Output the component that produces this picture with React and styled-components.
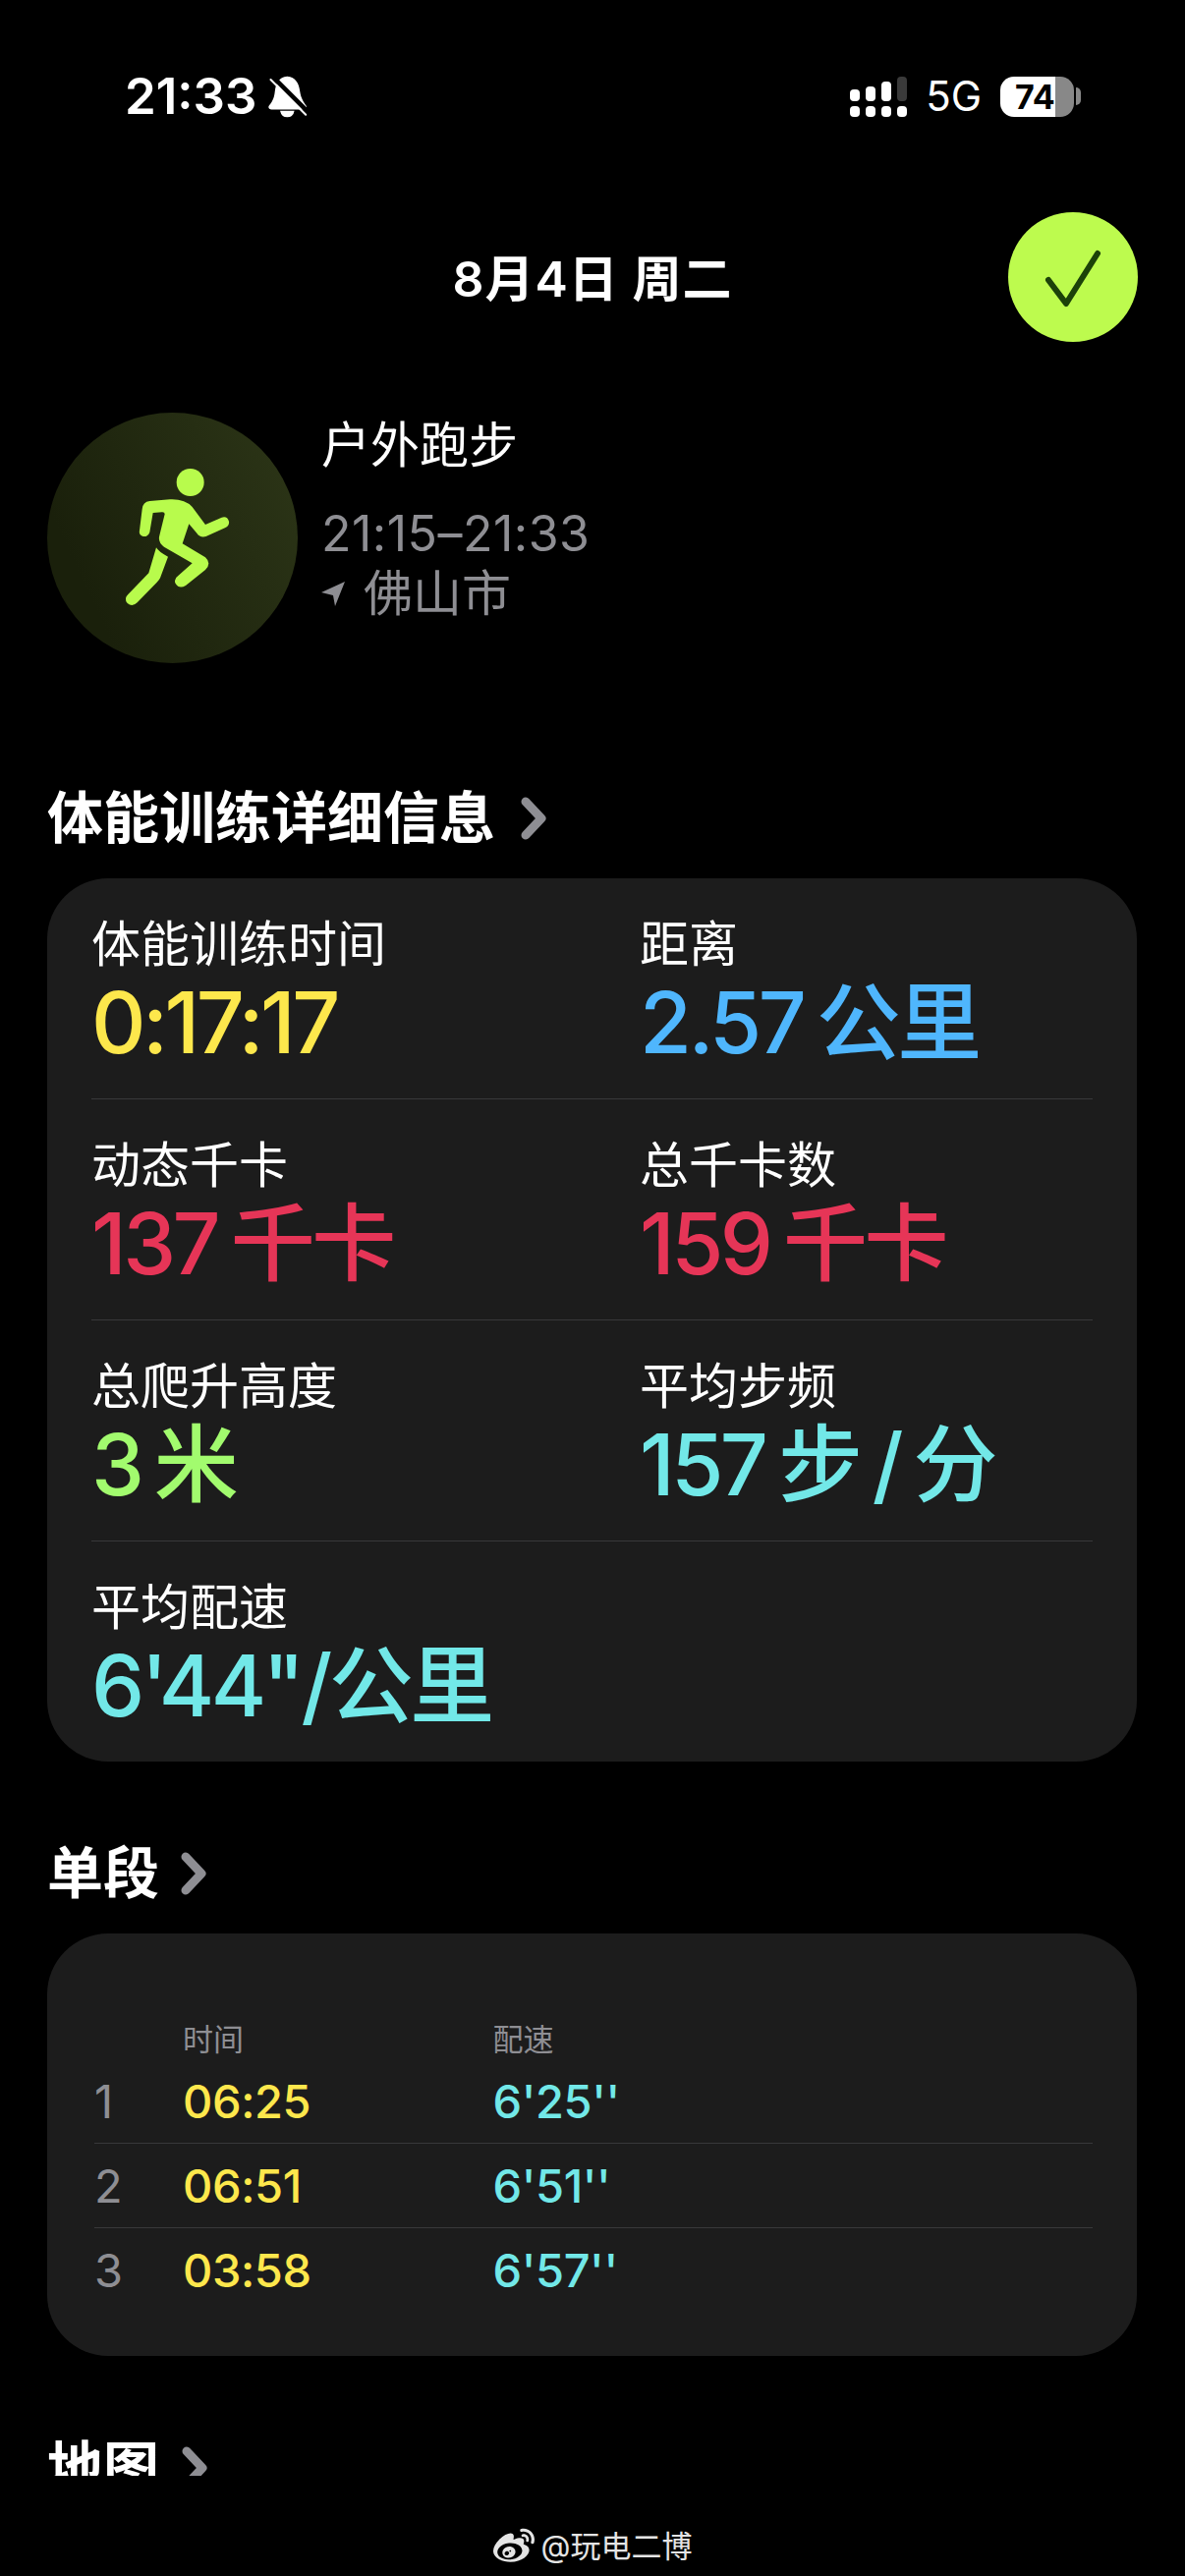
import React from 'react';
import styled, { createGlobalStyle } from 'styled-components';
import { FaWeibo } from 'react-icons/fa';

const Global = createGlobalStyle`
  html, body { margin: 0; padding: 0; background: #000; }
  body { font-family: Inter, "Noto Sans CJK SC", sans-serif; color: #fff; }
`;

const Screen = styled.div`
  width: 1206px;
  height: 2622px;
  background: #000;
  overflow: hidden;
`;

const Scroller = styled.main`
  height: 2520px;
  overflow: hidden;
`;

const StatusBar = styled.header`
  display: flex;
  align-items: center;
  justify-content: space-between;
  height: 44px;
  padding: 76px 106px 0 127px;
`;

const StatusGroup = styled.div`
  display: flex;
  align-items: center;
  gap: ${(p) => p.$gap}px;
`;

const Clock = styled.span`
  font-size: 51px;
  line-height: 44px;
  font-weight: 600;
`;

const Network = styled.span`
  font-size: 42px;
  line-height: 44px;
  font-weight: 400;
`;

const BatteryWrap = styled.div`
  display: flex;
  align-items: center;
  gap: 2px;
`;

const BatteryBody = styled.div`
  width: 75px;
  height: 41px;
  border-radius: 14px;
  background: linear-gradient(90deg, #fff 0 75%, #888 75% 100%);
  color: #000;
  font-size: 34px;
  font-weight: 700;
  line-height: 41px;
  padding-left: 15px;
  box-sizing: border-box;
`;

const BatteryNub = styled.div`
  width: 5px;
  height: 18px;
  background: #888;
  border-radius: 0 6px 6px 0;
`;

const TopRow = styled.div`
  display: grid;
  grid-template-columns: 1fr auto 1fr;
  align-items: center;
  height: 132px;
  margin-top: 96px;
  padding: 0 48px;
`;

const DateText = styled.h1`
  grid-column: 2;
  margin: 3px 0 0;
  font-size: 50px;
  font-weight: 600;
  line-height: 60px;
  letter-spacing: 1px;
`;

const DoneButton = styled.button`
  grid-column: 3;
  justify-self: end;
  width: 132px;
  height: 132px;
  padding: 0;
  border: 0;
  border-radius: 50%;
  background: #bdfb4e;
  display: flex;
  align-items: center;
  justify-content: center;
`;

const WorkoutRow = styled.section`
  display: flex;
  gap: 24px;
  margin: 72px 0 123px 48px;
`;

const WorkoutBadge = styled.div`
  width: 255px;
  height: 255px;
  border-radius: 50%;
  background: linear-gradient(65deg, #1a200b 20%, #2c3517 95%);
  flex: none;
`;

const WorkoutInfo = styled.div`
  display: flex;
  flex-direction: column;
  padding-top: 3px;
`;

const WorkoutName = styled.div`
  font-size: 50px;
  line-height: 60px;
`;

const WorkoutTime = styled.div`
  margin-top: 30px;
  font-size: 50px;
  line-height: 60px;
  letter-spacing: 0.5px;
  color: #8e8e93;
`;

const WorkoutPlace = styled.div`
  display: flex;
  align-items: center;
  gap: 19px;
  margin-top: 1px;
  font-size: 50px;
  line-height: 60px;
  color: #8e8e93;
`;

const SectionTitle = styled.h2`
  display: flex;
  align-items: center;
  gap: ${(p) => p.$gap}px;
  height: 70px;
  margin: 79px 0 26px 48px;
  font-size: 57px;
  font-weight: 700;
  line-height: 70px;
`;

const Panel = styled.div`
  width: 1109px;
  margin-left: 48px;
  box-sizing: border-box;
  background: #1c1c1c;
  border-radius: 62px;
`;

const MetricPanel = styled(Panel)`
  padding: 0 45px;
`;

const MetricRow = styled.div`
  display: grid;
  grid-template-columns: 558px 1fr;
  height: ${(p) => (p.$last ? 224 : 225)}px;
  box-sizing: border-box;
  padding-top: 37px;
  border-bottom: ${(p) => (p.$last ? 'none' : '1px solid #38383a')};
`;

const MetricLabel = styled.div`
  font-size: 50px;
  line-height: 60px;
`;

const MetricValue = styled.div`
  margin-top: 7px;
  font-size: 86px;
  font-weight: 500;
  line-height: 86px;
  letter-spacing: -3.5px;
  word-spacing: -6px;
  white-space: nowrap;
  color: ${(p) => p.$color};
`;

const SplitPanel = styled(Panel)`
  padding: 88px 45px 44px 48px;
`;

const SplitGrid = styled.div`
  display: grid;
  grid-template-columns: 90px 315.5px 1fr;
  align-items: center;
  height: ${(p) => (p.$head ? 40 : 86)}px;
  box-sizing: border-box;
  border-bottom: ${(p) => (p.$rule ? '1px solid #38383a' : 'none')};
`;

const SplitHead = styled.div`
  grid-column: ${(p) => p.$col};
  font-size: 31px;
  line-height: 40px;
  color: #8e8e93;
`;

const SplitCell = styled.div`
  font-size: 47px;
  line-height: 60px;
  letter-spacing: -0.4px;
  font-weight: ${(p) => (p.$index ? 400 : 500)};
  color: ${(p) => p.$color};
`;

const Watermark = styled.footer`
  display: flex;
  align-items: center;
  justify-content: center;
  gap: 7px;
  margin-top: 53px;
  height: 38px;
  font-size: 31px;
  line-height: 38px;
  color: #e4e4e4;
`;

/* Running figure, drawn on the badge's own 765-unit grid */
const RunnerIcon = () => (
  <svg width="255" height="255" viewBox="55 30 765 765" fill="#b8fb4c">
    <circle cx="492" cy="243" r="42" />
    <path d="M345 325 Q347 302 368 300 L430 295 Q475 293 498 318 L538 372 L588 350 Q605 345 610 362 Q612 375 598 382 L540 408 Q522 413 512 398 L488 370 L468 430 L538 472 Q558 490 538 510 L478 558 Q458 570 447 552 Q440 538 455 528 L498 490 L412 440 Q392 425 398 405 L414 340 Q414 333 405 334 L378 336 L368 395 Q362 410 348 408 Q334 404 337 390 Z" />
    <path d="M388 442 Q395 455 424 470 L400 535 Q397 542 390 548 L330 610 Q315 625 300 612 Q288 598 302 585 L365 520 Z" />
  </svg>
);

const CheckIcon = () => (
  <svg width="132" height="132" viewBox="0 0 132 132" fill="none">
    <path d="M41 69 L59 93 L91 42" stroke="#1c4209" strokeWidth="6" strokeLinecap="round" strokeLinejoin="round" />
  </svg>
);

const MutedBell = () => (
  <svg width="40" height="43" viewBox="520 80 120 130" style={{ flex: 'none' }}>
    <path d="M578 82 C604 84 614 104 617 128 C620 150 630 163 637 174 C638 180 635 184 628 184 L530 184 C522 184 518 178 522 172 C530 162 538 150 540 128 C543 104 552 84 578 82 Z" fill="#fff" />
    <path d="M556 188 Q578 188 600 188 Q596 208 578 208 Q560 208 556 188 Z" fill="#fff" />
    <path d="M534 84 L642 192" stroke="#000" strokeWidth="14" />
    <path d="M527 92 L635 200" stroke="#fff" strokeWidth="6" strokeLinecap="round" />
  </svg>
);

const SignalIcon = () => {
  const bars = [
    { x: 0, y: 13, h: 12, c: '#fff' },
    { x: 16, y: 10, h: 15, c: '#fff' },
    { x: 32, y: 5, h: 20, c: '#fff' },
    { x: 48, y: 0, h: 25, c: '#3a3a3a' },
  ];
  return (
    <svg width="58" height="41" viewBox="0 0 58 41">
      {bars.map((b) => (
        <g key={b.x}>
          <rect x={b.x} y={b.y} width="10" height={b.h} rx="4" fill={b.c} />
          <rect x={b.x} y="30" width="10" height="11" rx="4" fill="#fff" />
        </g>
      ))}
    </svg>
  );
};

const LocationArrow = () => (
  <svg width="24" height="25" viewBox="0 0 24 25" fill="#8e8e93" style={{ flex: 'none' }}>
    <path d="M24 0 L0 11 L12 14 L14 25 Z" />
  </svg>
);

const Chevron = () => (
  <svg width="27" height="44" viewBox="0 0 27 44" fill="none">
    <path d="M5 5 L21 22 L5 39" stroke="#8e8e93" strokeWidth="9" strokeLinecap="round" strokeLinejoin="round" />
  </svg>
);

const YELLOW = '#fde74c';
const BLUE = '#4fb6fd';
const RED = '#e63557';
const GREEN = '#a2fb6e';
const CYAN = '#72e8e8';

const metricRows = [
  [
    { label: '体能训练时间', value: '0:17:17', color: YELLOW },
    { label: '距离', value: '2.57 公里', color: BLUE },
  ],
  [
    { label: '动态千卡', value: '137 千卡', color: RED },
    { label: '总千卡数', value: '159 千卡', color: RED },
  ],
  [
    { label: '总爬升高度', value: '3 米', color: GREEN },
    { label: '平均步频', value: '157 步 / 分', color: CYAN },
  ],
  [{ label: '平均配速', value: `6'44"/公里`, color: CYAN }],
];

const splits = [
  { n: 1, time: '06:25', pace: `6'25''` },
  { n: 2, time: '06:51', pace: `6'51''` },
  { n: 3, time: '03:58', pace: `6'57''` },
];

export default function App() {
  return (
    <Screen>
      <Global />
      <Scroller>
        <StatusBar>
          <StatusGroup $gap={11}>
            <Clock>21:33</Clock>
            <MutedBell />
          </StatusGroup>
          <StatusGroup $gap={19}>
            <SignalIcon />
            <Network>5G</Network>
            <BatteryWrap>
              <BatteryBody>74</BatteryBody>
              <BatteryNub />
            </BatteryWrap>
          </StatusGroup>
        </StatusBar>

        <TopRow>
          <DateText>8月4日 周二</DateText>
          <DoneButton aria-label="完成">
            <CheckIcon />
          </DoneButton>
        </TopRow>

        <WorkoutRow>
          <WorkoutBadge>
            <RunnerIcon />
          </WorkoutBadge>
          <WorkoutInfo>
            <WorkoutName>户外跑步</WorkoutName>
            <WorkoutTime>21:15–21:33</WorkoutTime>
            <WorkoutPlace>
              <LocationArrow />
              佛山市
            </WorkoutPlace>
          </WorkoutInfo>
        </WorkoutRow>

        <SectionTitle $gap={26}>
          体能训练详细信息
          <Chevron />
        </SectionTitle>
        <MetricPanel>
          {metricRows.map((row, i) => (
            <MetricRow key={row[0].label} $last={i === metricRows.length - 1}>
              {row.map((m) => (
                <div key={m.label}>
                  <MetricLabel>{m.label}</MetricLabel>
                  <MetricValue $color={m.color}>{m.value}</MetricValue>
                </div>
              ))}
            </MetricRow>
          ))}
        </MetricPanel>

        <SectionTitle $gap={22}>
          单段
          <Chevron />
        </SectionTitle>
        <SplitPanel>
          <SplitGrid $head>
            <SplitHead $col={2}>时间</SplitHead>
            <SplitHead $col={3}>配速</SplitHead>
          </SplitGrid>
          {splits.map((s, i) => (
            <SplitGrid key={s.n} $rule={i < splits.length - 1}>
              <SplitCell $index $color="#8e8e93">{s.n}</SplitCell>
              <SplitCell $color={YELLOW}>{s.time}</SplitCell>
              <SplitCell $color={CYAN}>{s.pace}</SplitCell>
            </SplitGrid>
          ))}
        </SplitPanel>

        <SectionTitle $gap={23}>
          地图
          <Chevron />
        </SectionTitle>
      </Scroller>

      <Watermark>
        <FaWeibo size={42} />
        <span>@玩电二博</span>
      </Watermark>
    </Screen>
  );
}
